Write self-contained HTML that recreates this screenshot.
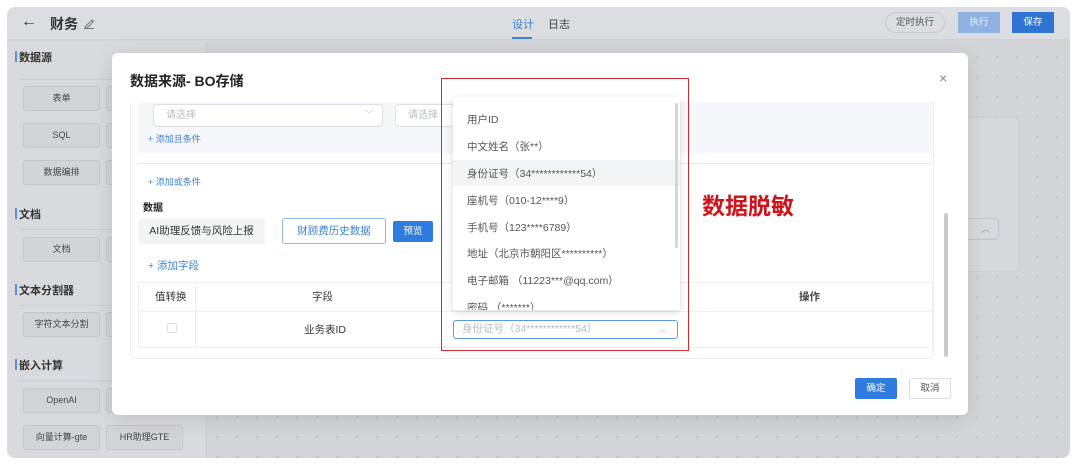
<!DOCTYPE html>
<html><head><meta charset="utf-8"><style>
*{margin:0;padding:0;box-sizing:border-box}
body{width:1080px;height:467px;background:#fff;position:relative;overflow:hidden;font-family:"Liberation Sans","Noto Sans CJK SC",sans-serif;color:#333}
.a{position:absolute}
.app{left:7px;top:7px;width:1063px;height:451px;border-radius:8px;overflow:hidden;background-color:#d3d5d9;background-image:radial-gradient(circle,#bfc2c7 1px,transparent 1.2px);background-size:20px 20px}
.hdr{left:0;top:0;width:1063px;height:33px;background:#dcdde0;border-bottom:1px solid #cfd1d5}
.side{left:0;top:34px;width:200px;height:417px;background:#d9dadd;border-right:1px solid #c9cbcf}
.sec{font-size:11px;font-weight:bold;color:#333;left:12px}
.sec:before{content:"";position:absolute;left:-4px;top:2px;width:2px;height:11px;background:#5a8fd8}
.ln{left:12px;width:185px;height:1px;background:#c9ccd0}
.btn{height:25px;border:1px solid #c4c6ca;background:#d3d4d7;border-radius:3px;font-size:9px;color:#444;text-align:center;line-height:23px}
.modal{left:112px;top:53px;width:856px;height:362px;background:#fff;border-radius:6px;box-shadow:0 4px 20px rgba(0,0,0,.12)}
.blue{color:#3b82d6}
.tb{border:1px solid #eceef1}
.sel{height:23px;border:1px solid #dcdfe6;border-radius:4px;background:#fff;font-size:10px;color:#b8bcc4;line-height:21px;padding-left:12px}
.it{left:14px;font-size:10.5px;color:#555}
</style></head><body>
<div class="a app">
 <div class="a hdr">
  <div class="a" style="left:14px;top:6px;font-size:16px;color:#333">←</div>
  <div class="a" style="left:43px;top:7px;font-size:14px;font-weight:bold;color:#333">财务</div>
  <svg class="a" style="left:76px;top:10px" width="12" height="12"><path d="M2 10 L9 3 L10.5 4.5 L3.5 11.5 Z M1 11.5 H11" stroke="#777" fill="none" stroke-width="1"/></svg>
  <div class="a blue" style="left:505px;top:9px;font-size:11px">设计</div>
  <div class="a" style="left:505px;top:30px;width:20px;height:2px;background:#3b82d6"></div>
  <div class="a" style="left:541px;top:9px;font-size:11px;color:#444">日志</div>
  <div class="a" style="left:878px;top:5px;width:60px;height:21px;border:1px solid #c6c8cc;border-radius:11px;font-size:9.5px;text-align:center;line-height:19px;color:#555">定时执行</div>
  <div class="a" style="left:951px;top:5px;width:42px;height:21px;background:#8fb2e2;color:#e8f0fb;font-size:9.5px;text-align:center;line-height:21px">执行</div>
  <div class="a" style="left:1005px;top:5px;width:42px;height:21px;background:#2f74d2;color:#fff;font-size:9.5px;text-align:center;line-height:21px">保存</div>
 </div>
 <div class="a side">
  <div class="a sec" style="top:8px">数据源</div><div class="a ln" style="top:38px"></div>
  <div class="a btn" style="left:16px;top:45px;width:77px">表单</div><div class="a btn" style="left:99px;top:45px;width:77px"></div>
  <div class="a btn" style="left:16px;top:82px;width:77px">SQL</div><div class="a btn" style="left:99px;top:82px;width:77px"></div>
  <div class="a btn" style="left:16px;top:119px;width:77px">数据编排</div><div class="a btn" style="left:99px;top:119px;width:77px"></div>
  <div class="a sec" style="top:165px">文档</div><div class="a ln" style="top:188px"></div>
  <div class="a btn" style="left:16px;top:196px;width:77px">文档</div><div class="a btn" style="left:99px;top:196px;width:77px"></div>
  <div class="a sec" style="top:241px">文本分割器</div><div class="a ln" style="top:264px"></div>
  <div class="a btn" style="left:16px;top:271px;width:77px">字符文本分割</div><div class="a btn" style="left:99px;top:271px;width:77px"></div>
  <div class="a sec" style="top:316px">嵌入计算</div><div class="a ln" style="top:339px"></div>
  <div class="a btn" style="left:16px;top:347px;width:77px">OpenAI</div><div class="a btn" style="left:99px;top:347px;width:77px"></div>
  <div class="a btn" style="left:16px;top:384px;width:77px">向量计算-gte</div><div class="a btn" style="left:99px;top:384px;width:77px">HR助理GTE</div>
  <div class="a btn" style="left:16px;top:421px;width:77px"></div><div class="a btn" style="left:99px;top:421px;width:77px"></div>
 </div>
 <div class="a" style="left:930px;top:110px;width:82px;height:155px;background:#d7d9dc;border:1px solid #cbcdd1;border-radius:3px"></div>
 <div class="a" style="left:950px;top:211px;width:42px;height:22px;border:1px solid #c0c3c7;border-radius:4px;background:#d7d9dc;font-size:9px;color:#999;text-align:right;padding-right:8px;line-height:20px">︿</div>
</div>

<div class="a modal">
 <div class="a" style="left:18px;top:18px;font-size:14px;font-weight:bold;color:#222">数据来源- BO存储</div>
 <div class="a" style="left:827px;top:17px;font-size:14px;color:#888">×</div>
 <div class="a" style="left:18px;top:49px;width:804px;height:257px;border:1px solid #eceef1;border-top:none;border-radius:0 0 6px 6px"></div>
 <div class="a" style="left:26px;top:49px;width:795px;height:51px;background:#f5f7fa"></div>
 <div class="a sel" style="left:41px;top:51px;width:230px">请选择<span style="position:absolute;right:8px;color:#ccc">﹀</span></div>
 <div class="a sel" style="left:283px;top:51px;width:60px">请选择</div>
 <div class="a blue" style="left:36px;top:79px;font-size:9px">+ 添加且条件</div>
 <div class="a" style="left:26px;top:110px;width:795px;height:1px;background:#e6e8eb"></div>
 <div class="a blue" style="left:36px;top:122px;font-size:9px">+ 添加或条件</div>
 <div class="a" style="left:31px;top:146px;font-size:10px;font-weight:bold;color:#222">数据</div>
 <div class="a" style="left:26px;top:165px;width:127px;height:26px;background:#f3f4f6;border-radius:3px;font-size:10.5px;text-align:center;line-height:26px;color:#333">AI助理反馈与风险上报</div>
 <div class="a blue" style="left:170px;top:165px;width:104px;height:26px;border:1px solid #8fb6ea;border-radius:3px;font-size:10.5px;text-align:center;line-height:24px">财顾费历史数据</div>
 <div class="a" style="left:281px;top:168px;width:40px;height:21px;background:#2f7ce0;color:#fff;border-radius:2px;font-size:9.5px;text-align:center;line-height:21px">预览</div>
 <div class="a blue" style="left:36px;top:205px;font-size:10.5px">+ 添加字段</div>
 <div class="a tb" style="left:26px;top:229px;width:795px;height:66px"></div>
 <div class="a" style="left:26px;top:258px;width:795px;height:1px;background:#eceef1"></div>
 <div class="a" style="left:83px;top:229px;width:1px;height:66px;background:#eceef1"></div>
 <div class="a" style="left:43px;top:236px;font-size:10.5px;color:#333">值转换</div>
 <div class="a" style="left:200px;top:236px;font-size:10.5px;color:#333">字段</div>
 <div class="a" style="left:687px;top:236px;font-size:10.5px;font-weight:bold;color:#444">操作</div>
 <div class="a" style="left:55px;top:270px;width:10px;height:10px;border:1px solid #ddd;border-radius:2px"></div>
 <div class="a" style="left:192px;top:269px;font-size:10.5px;color:#333">业务表ID</div>
 <div class="a" style="left:832px;top:160px;width:4px;height:144px;background:#c9cbcf;border-radius:2px"></div>
 <div class="a" style="left:743px;top:325px;width:42px;height:21px;background:#2f7ce0;color:#fff;border-radius:2px;font-size:9.5px;text-align:center;line-height:21px">确定</div>
 <div class="a" style="left:797px;top:325px;width:42px;height:21px;border:1px solid #ddd;border-radius:2px;font-size:9.5px;text-align:center;line-height:19px;color:#555">取消</div>
</div>

<div class="a" style="left:453px;top:97px;width:227px;height:213px;background:#fff;box-shadow:0 2px 8px rgba(0,0,0,.15);border-radius:3px;overflow:hidden">
 <div class="a" style="left:0;top:63px;width:227px;height:26px;background:#f3f4f6"></div>
 <div class="a it" style="top:15px">用户ID</div>
 <div class="a it" style="top:42px">中文姓名（张**）</div>
 <div class="a it blue" style="top:69px">身份证号（34************54）</div>
 <div class="a it" style="top:96px">座机号（010-12****9）</div>
 <div class="a it" style="top:123px">手机号（123****6789）</div>
 <div class="a it" style="top:149px">地址（北京市朝阳区**********）</div>
 <div class="a it" style="top:176px">电子邮箱 （11223***@qq.com）</div>
 <div class="a it" style="top:203px">密码 （*******）</div>
 <div class="a" style="left:222px;top:6px;width:3px;height:145px;background:#d5d7da;border-radius:2px"></div>
</div>
<div class="a" style="left:453px;top:320px;width:225px;height:19px;border:1px solid #5b9be6;border-radius:3px;background:#fff;font-size:10.5px;color:#b8bcc4;line-height:17px;padding-left:8px">身份证号（34************54）<span style="position:absolute;right:10px;top:0;font-size:8px;color:#bbb">︿</span></div>
<div class="a" style="left:441px;top:78px;width:248px;height:273px;border:1.5px solid #d12a35"></div>
<div class="a" style="left:702px;top:187px;font-size:23px;font-weight:bold;color:#d0121b">数据脱敏</div>
</body></html>
